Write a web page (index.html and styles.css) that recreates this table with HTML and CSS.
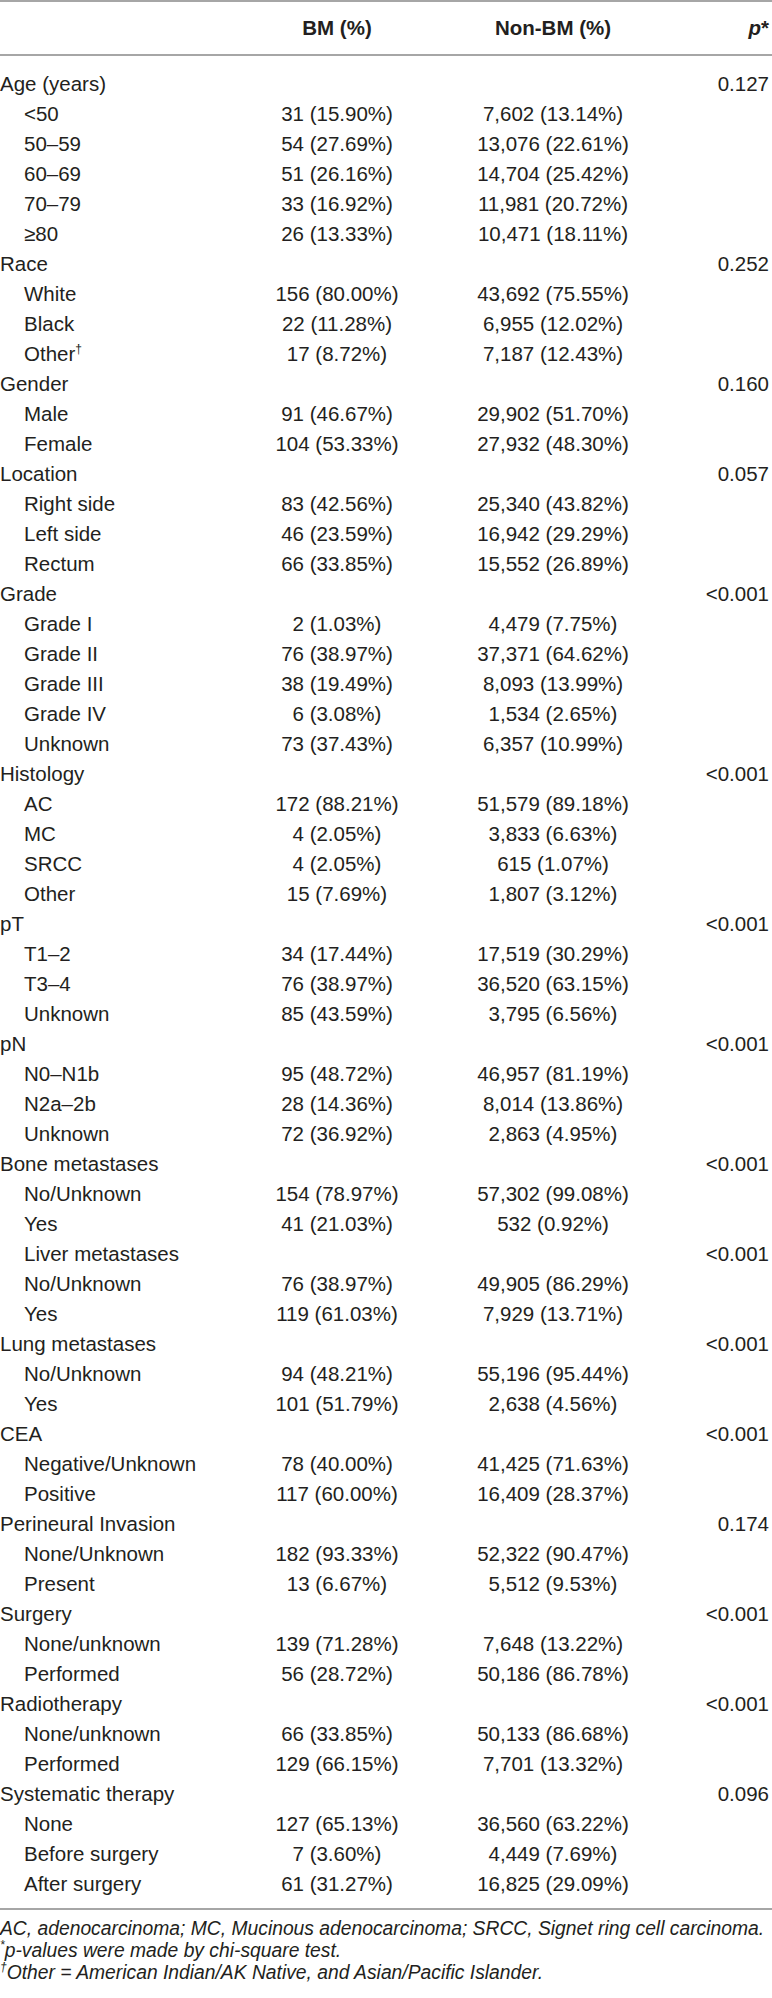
FILE: index.html
```html
<!DOCTYPE html>
<html lang="en">
<head>
  <meta charset="UTF-8" />
  <title>Characteristics of patients with and without BM</title>
  <link rel="stylesheet" href="styles.css">
</head>
<body>
  <table class="stats">
    <colgroup>
      <col class="c-label">
      <col class="c-bm">
      <col class="c-non">
      <col class="c-p">
    </colgroup>
    <thead>
      <tr>
        <th></th>
        <th class="mid">BM (%)</th>
        <th class="mid">Non-BM (%)</th>
        <th class="pv"><i>p</i>*</th>
      </tr>
    </thead>
    <tbody>
      <tr><td>Age (years)</td><td></td><td></td><td class="pv">0.127</td></tr>
      <tr><td class="sub">&lt;50</td><td class="mid">31 (15.90%)</td><td class="mid">7,602 (13.14%)</td><td></td></tr>
      <tr><td class="sub">50–59</td><td class="mid">54 (27.69%)</td><td class="mid">13,076 (22.61%)</td><td></td></tr>
      <tr><td class="sub">60–69</td><td class="mid">51 (26.16%)</td><td class="mid">14,704 (25.42%)</td><td></td></tr>
      <tr><td class="sub">70–79</td><td class="mid">33 (16.92%)</td><td class="mid">11,981 (20.72%)</td><td></td></tr>
      <tr><td class="sub">≥80</td><td class="mid">26 (13.33%)</td><td class="mid">10,471 (18.11%)</td><td></td></tr>
      <tr><td>Race</td><td></td><td></td><td class="pv">0.252</td></tr>
      <tr><td class="sub">White</td><td class="mid">156 (80.00%)</td><td class="mid">43,692 (75.55%)</td><td></td></tr>
      <tr><td class="sub">Black</td><td class="mid">22 (11.28%)</td><td class="mid">6,955 (12.02%)</td><td></td></tr>
      <tr><td class="sub">Other<sup>†</sup></td><td class="mid">17 (8.72%)</td><td class="mid">7,187 (12.43%)</td><td></td></tr>
      <tr><td>Gender</td><td></td><td></td><td class="pv">0.160</td></tr>
      <tr><td class="sub">Male</td><td class="mid">91 (46.67%)</td><td class="mid">29,902 (51.70%)</td><td></td></tr>
      <tr><td class="sub">Female</td><td class="mid">104 (53.33%)</td><td class="mid">27,932 (48.30%)</td><td></td></tr>
      <tr><td>Location</td><td></td><td></td><td class="pv">0.057</td></tr>
      <tr><td class="sub">Right side</td><td class="mid">83 (42.56%)</td><td class="mid">25,340 (43.82%)</td><td></td></tr>
      <tr><td class="sub">Left side</td><td class="mid">46 (23.59%)</td><td class="mid">16,942 (29.29%)</td><td></td></tr>
      <tr><td class="sub">Rectum</td><td class="mid">66 (33.85%)</td><td class="mid">15,552 (26.89%)</td><td></td></tr>
      <tr><td>Grade</td><td></td><td></td><td class="pv">&lt;0.001</td></tr>
      <tr><td class="sub">Grade I</td><td class="mid">2 (1.03%)</td><td class="mid">4,479 (7.75%)</td><td></td></tr>
      <tr><td class="sub">Grade II</td><td class="mid">76 (38.97%)</td><td class="mid">37,371 (64.62%)</td><td></td></tr>
      <tr><td class="sub">Grade III</td><td class="mid">38 (19.49%)</td><td class="mid">8,093 (13.99%)</td><td></td></tr>
      <tr><td class="sub">Grade IV</td><td class="mid">6 (3.08%)</td><td class="mid">1,534 (2.65%)</td><td></td></tr>
      <tr><td class="sub">Unknown</td><td class="mid">73 (37.43%)</td><td class="mid">6,357 (10.99%)</td><td></td></tr>
      <tr><td>Histology</td><td></td><td></td><td class="pv">&lt;0.001</td></tr>
      <tr><td class="sub">AC</td><td class="mid">172 (88.21%)</td><td class="mid">51,579 (89.18%)</td><td></td></tr>
      <tr><td class="sub">MC</td><td class="mid">4 (2.05%)</td><td class="mid">3,833 (6.63%)</td><td></td></tr>
      <tr><td class="sub">SRCC</td><td class="mid">4 (2.05%)</td><td class="mid">615 (1.07%)</td><td></td></tr>
      <tr><td class="sub">Other</td><td class="mid">15 (7.69%)</td><td class="mid">1,807 (3.12%)</td><td></td></tr>
      <tr><td>pT</td><td></td><td></td><td class="pv">&lt;0.001</td></tr>
      <tr><td class="sub">T1–2</td><td class="mid">34 (17.44%)</td><td class="mid">17,519 (30.29%)</td><td></td></tr>
      <tr><td class="sub">T3–4</td><td class="mid">76 (38.97%)</td><td class="mid">36,520 (63.15%)</td><td></td></tr>
      <tr><td class="sub">Unknown</td><td class="mid">85 (43.59%)</td><td class="mid">3,795 (6.56%)</td><td></td></tr>
      <tr><td>pN</td><td></td><td></td><td class="pv">&lt;0.001</td></tr>
      <tr><td class="sub">N0–N1b</td><td class="mid">95 (48.72%)</td><td class="mid">46,957 (81.19%)</td><td></td></tr>
      <tr><td class="sub">N2a–2b</td><td class="mid">28 (14.36%)</td><td class="mid">8,014 (13.86%)</td><td></td></tr>
      <tr><td class="sub">Unknown</td><td class="mid">72 (36.92%)</td><td class="mid">2,863 (4.95%)</td><td></td></tr>
      <tr><td>Bone metastases</td><td></td><td></td><td class="pv">&lt;0.001</td></tr>
      <tr><td class="sub">No/Unknown</td><td class="mid">154 (78.97%)</td><td class="mid">57,302 (99.08%)</td><td></td></tr>
      <tr><td class="sub">Yes</td><td class="mid">41 (21.03%)</td><td class="mid">532 (0.92%)</td><td></td></tr>
      <tr><td class="sub">Liver metastases</td><td></td><td></td><td class="pv">&lt;0.001</td></tr>
      <tr><td class="sub">No/Unknown</td><td class="mid">76 (38.97%)</td><td class="mid">49,905 (86.29%)</td><td></td></tr>
      <tr><td class="sub">Yes</td><td class="mid">119 (61.03%)</td><td class="mid">7,929 (13.71%)</td><td></td></tr>
      <tr><td>Lung metastases</td><td></td><td></td><td class="pv">&lt;0.001</td></tr>
      <tr><td class="sub">No/Unknown</td><td class="mid">94 (48.21%)</td><td class="mid">55,196 (95.44%)</td><td></td></tr>
      <tr><td class="sub">Yes</td><td class="mid">101 (51.79%)</td><td class="mid">2,638 (4.56%)</td><td></td></tr>
      <tr><td>CEA</td><td></td><td></td><td class="pv">&lt;0.001</td></tr>
      <tr><td class="sub">Negative/Unknown</td><td class="mid">78 (40.00%)</td><td class="mid">41,425 (71.63%)</td><td></td></tr>
      <tr><td class="sub">Positive</td><td class="mid">117 (60.00%)</td><td class="mid">16,409 (28.37%)</td><td></td></tr>
      <tr><td>Perineural Invasion</td><td></td><td></td><td class="pv">0.174</td></tr>
      <tr><td class="sub">None/Unknown</td><td class="mid">182 (93.33%)</td><td class="mid">52,322 (90.47%)</td><td></td></tr>
      <tr><td class="sub">Present</td><td class="mid">13 (6.67%)</td><td class="mid">5,512 (9.53%)</td><td></td></tr>
      <tr><td>Surgery</td><td></td><td></td><td class="pv">&lt;0.001</td></tr>
      <tr><td class="sub">None/unknown</td><td class="mid">139 (71.28%)</td><td class="mid">7,648 (13.22%)</td><td></td></tr>
      <tr><td class="sub">Performed</td><td class="mid">56 (28.72%)</td><td class="mid">50,186 (86.78%)</td><td></td></tr>
      <tr><td>Radiotherapy</td><td></td><td></td><td class="pv">&lt;0.001</td></tr>
      <tr><td class="sub">None/unknown</td><td class="mid">66 (33.85%)</td><td class="mid">50,133 (86.68%)</td><td></td></tr>
      <tr><td class="sub">Performed</td><td class="mid">129 (66.15%)</td><td class="mid">7,701 (13.32%)</td><td></td></tr>
      <tr><td>Systematic therapy</td><td></td><td></td><td class="pv">0.096</td></tr>
      <tr><td class="sub">None</td><td class="mid">127 (65.13%)</td><td class="mid">36,560 (63.22%)</td><td></td></tr>
      <tr><td class="sub">Before surgery</td><td class="mid">7 (3.60%)</td><td class="mid">4,449 (7.69%)</td><td></td></tr>
      <tr><td class="sub">After surgery</td><td class="mid">61 (31.27%)</td><td class="mid">16,825 (29.09%)</td><td></td></tr>
    </tbody>
  </table>

  <div class="notes">
    <p>AC, adenocarcinoma; MC, Mucinous adenocarcinoma; SRCC, Signet ring cell carcinoma.</p>
    <p><sup>*</sup>p-values were made by chi-square test.</p>
    <p><sup>†</sup>Other = American Indian/AK Native, and Asian/Pacific Islander.</p>
  </div>
</body>
</html>
```

FILE: styles.css
```css
body { margin: 0; background: #fff; color: #231f20; font-family: "Liberation Sans", Arial, sans-serif; }
.stats { width: 772px; border-collapse: collapse; table-layout: fixed; font-size: 20.5px; border-top: 2px solid #a6a6a6; border-bottom: 2px solid #a6a6a6; }
.c-label { width: 245px; }
.c-bm { width: 184px; }
.c-non { width: 248px; }
.c-p { width: 95px; }
th { font-weight: bold; height: 52px; padding: 0; border-bottom: 2px solid #a6a6a6; }
td { height: 30px; padding: 0; line-height: 30px; white-space: nowrap; text-align: left; }
tbody tr:first-child td { padding-top: 13px; }
tbody tr:last-child td { padding-bottom: 9px; }
.mid { text-align: center; }
.pv { text-align: right; padding-right: 3px; }
.sub { padding-left: 24px; }
sup { font-size: 12px; line-height: 0; vertical-align: 8px; }
.notes { font-style: italic; font-size: 19.3px; line-height: 22px; padding-top: 8px; white-space: nowrap; }
.notes p { margin: 0; }
```
